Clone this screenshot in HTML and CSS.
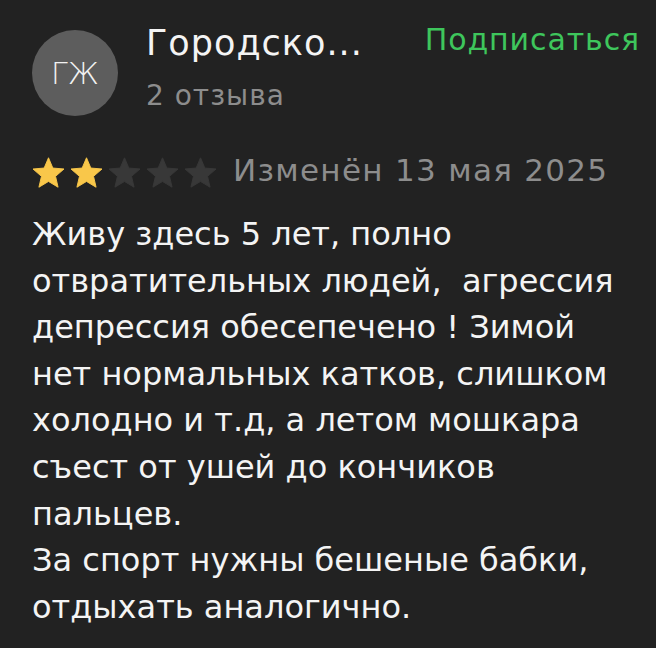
FILE: index.html
```html
<!DOCTYPE html>
<html lang="ru">
<head>
  <meta charset="UTF-8">
  <meta name="viewport" content="width=device-width, initial-scale=1.0">
  <title>Отзыв</title>
  <link rel="stylesheet" href="styles.css">
</head>

<body>
  <div class="review">
    <div class="review-head">
      <div class="avatar">ГЖ</div>
      <div class="author">
        <div class="author-name">Городско...</div>
        <div class="author-count">2 отзыва</div>
      </div>
      <div class="subscribe">Подписаться</div>
    </div>

    <div class="review-meta">
      <!-- рейтинг: 2 из 5 -->
      <div class="stars">
        <svg class="star on" viewBox="1.5 1.5 21 20"><path d="M12 17.27L18.18 21l-1.64-7.03L22 9.24l-7.19-.61L12 2 9.19 8.63 2 9.24l5.46 4.73L5.82 21z"/></svg>
        <svg class="star on" viewBox="1.5 1.5 21 20"><path d="M12 17.27L18.18 21l-1.64-7.03L22 9.24l-7.19-.61L12 2 9.19 8.63 2 9.24l5.46 4.73L5.82 21z"/></svg>
        <svg class="star" viewBox="1.5 1.5 21 20"><path d="M12 17.27L18.18 21l-1.64-7.03L22 9.24l-7.19-.61L12 2 9.19 8.63 2 9.24l5.46 4.73L5.82 21z"/></svg>
        <svg class="star" viewBox="1.5 1.5 21 20"><path d="M12 17.27L18.18 21l-1.64-7.03L22 9.24l-7.19-.61L12 2 9.19 8.63 2 9.24l5.46 4.73L5.82 21z"/></svg>
        <svg class="star" viewBox="1.5 1.5 21 20"><path d="M12 17.27L18.18 21l-1.64-7.03L22 9.24l-7.19-.61L12 2 9.19 8.63 2 9.24l5.46 4.73L5.82 21z"/></svg>
      </div>
      <div class="review-date">Изменён 13 мая 2025</div>
    </div>

    <p class="review-text">Живу здесь 5 лет, полно отвратительных людей,&nbsp; агрессия депрессия обесепечено ! Зимой нет нормальных катков, слишком холодно и т.д, а летом мошкара съест от ушей до кончиков пальцев.<br>За спорт нужны бешеные бабки, отдыхать аналогично.</p>
  </div>
</body>
</html>
```

FILE: styles.css
```css
* {
  box-sizing: border-box;
  padding: 0;
  margin: 0;
}
html, body {
  background-color: #222;
  font-family: "DejaVu Sans", "Noto Sans", sans-serif;
}
.review {
  width: 656px;
  height: 648px;
  padding: 30px 16px 0 32px;
  color: #f4f4f4;
}
.review-head {
  display: flex;
  align-items: flex-start;
}
.avatar {
  width: 86px;
  height: 86px;
  border-radius: 50%;
  background-color: #5d5d5d;
  color: #f2f2f2;
  font-size: 30px;
  font-weight: 300;
  display: flex;
  justify-content: center;
  align-items: center;
  flex-shrink: 0;
}
.author {
  margin-left: 28px;
  flex: 1;
}
.author-name {
  margin-top: -5px;
  font-size: 35px;
  line-height: 36px;
  letter-spacing: 1px;
}
.author-count {
  margin-top: 17px;
  font-size: 28px;
  line-height: 36px;
  letter-spacing: 1px;
  color: #8d8d8d;
}
.subscribe {
  margin-top: -5px;
  font-size: 30px;
  line-height: 30px;
  letter-spacing: 0.9px;
  color: #3ec65c;
}
.review-meta {
  display: flex;
  align-items: flex-start;
  margin-top: 39px;
}
.stars {
  display: flex;
  gap: 5px;
  margin-top: 2px;
}
.star {
  width: 33px;
  height: 31px;
  fill: #383838;
  stroke: #383838;
  stroke-width: 0.6;
  stroke-linejoin: round;
}
.star.on {
  fill: #f9c74a;
  stroke: #f9c74a;
}
.review-date {
  margin-left: 16px;
  font-size: 31px;
  line-height: 31px;
  letter-spacing: 1.3px;
  color: #8d8d8d;
}
.review-text {
  margin-top: 23px;
  font-size: 32px;
  line-height: 46.6px;
}
```
